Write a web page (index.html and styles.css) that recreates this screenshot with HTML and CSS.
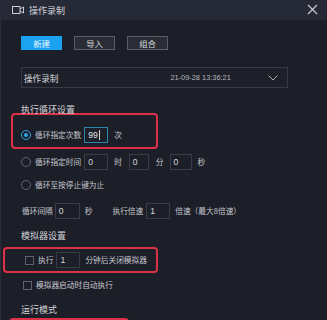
FILE: index.html
```html
<!DOCTYPE html>
<html lang="zh-CN">
<head>
<meta charset="utf-8">
<title>操作录制</title>
<link rel="stylesheet" href="styles.css">
</head>
<body>
<div class="window">
  <div class="titlebar">
    <svg class="cam" width="12" height="8" viewBox="0 0 12 8"><rect x="0.5" y="0.5" width="7.5" height="7" fill="none" stroke="#c9cbd2" stroke-width="1"/><path d="M8 3 L11.5 1 L11.5 7 L8 5" fill="none" stroke="#c9cbd2" stroke-width="1"/></svg>
    <span class="title">操作录制</span>
    <svg class="close" width="11" height="11" viewBox="0 0 11 11"><path d="M1 1 L10 10 M10 1 L1 10" stroke="#c2c4ca" stroke-width="1.3"/></svg>
  </div>
  <div class="content">
    <div class="btnrow">
      <div class="btn primary">新建</div>
      <div class="btn">导入</div>
      <div class="btn">组合</div>
    </div>
    <div class="select">
      <span class="sel-name">操作录制</span>
      <span class="sel-date">21-09-28 13:36:21</span>
      <svg class="chev" width="10" height="6" viewBox="0 0 10 6"><path d="M0.5 0.5 L5 5 L9.5 0.5" fill="none" stroke="#a9abb2" stroke-width="1"/></svg>
    </div>

    <div class="heading h1">执行循环设置</div>
    <div class="hl hl1">
      <div class="row">
        <span class="radio on"></span>
        <span class="lbl">循环指定次数</span>
        <span class="inp active w24 ml3">99<span class="caret"></span></span>
        <span class="lbl ml6">次</span>
      </div>
    </div>
    <div class="row r2">
      <span class="radio"></span>
      <span class="lbl">循环指定时间</span>
      <span class="inp w24 ml3">0</span>
      <span class="lbl ml6">时</span>
      <span class="inp w20 ml7">0</span>
      <span class="lbl ml7">分</span>
      <span class="inp w22 ml6">0</span>
      <span class="lbl ml6">秒</span>
    </div>
    <div class="row r3">
      <span class="radio"></span>
      <span class="lbl">循环至按停止键为止</span>
    </div>
    <div class="row r4">
      <span class="lbl nomargin">循环间隔</span>
      <span class="inp w25 ml2">0</span>
      <span class="lbl ml5">秒</span>
      <span class="lbl ml20">执行倍速</span>
      <span class="inp w24 ml3">1</span>
      <span class="lbl ml5">倍速（最大8倍速）</span>
    </div>

    <div class="heading h2">模拟器设置</div>
    <div class="hl hl2">
      <div class="row">
        <span class="check"></span>
        <span class="lbl">执行</span>
        <span class="inp w24 ml3">1</span>
        <span class="lbl ml5">分钟后关闭模拟器</span>
      </div>
    </div>
    <div class="row r6">
      <span class="check"></span>
      <span class="lbl">模拟器启动时自动执行</span>
    </div>

    <div class="heading h3">运行模式</div>
    <div class="hl hl3"></div>
  </div>
</div>
</body>
</html>
```

FILE: styles.css
```css
* { box-sizing: border-box; }
html, body {
  margin: 0;
  padding: 0;
  width: 327px;
  height: 320px;
  overflow: hidden;
  background: #1c1e28;
  font-family: "Noto Sans CJK SC", "Noto Sans", sans-serif;
  color: #c6c8ce;
}
.window {
  width: 327px;
  height: 320px;
  background: #1c1e28;
  border-left: 1px solid #2a2d39;
}
.titlebar {
  height: 21px;
  background: #262936;
  display: flex;
  align-items: center;
  padding-left: 11px;
  padding-right: 9px;
  border-bottom: 1px solid #20222d;
}
.title {
  margin-left: 5px;
  font-size: 9px;
  color: #cfd1d7;
  line-height: 21px;
}
.close { margin-left: auto; margin-top: -1px; }

.content { padding-left: 20px; }

.btnrow {
  display: flex;
  gap: 12px;
  margin-top: 15px;
}
.btn {
  width: 41px;
  height: 14px;
  border: 1px solid #5b5e67;
  background: #2a2d35;
  font-size: 8.4px;
  line-height: 12px;
  text-align: center;
  color: #d4d6db;
}
.btn.primary {
  background: #1ba2f0;
  border-color: #1ba2f0;
  color: #eaf6ff;
}

.select {
  margin-top: 17px;
  width: 267px;
  height: 21px;
  border: 1px solid #363946;
  background: #1e2029;
  display: flex;
  align-items: center;
  padding-left: 2px;
}
.sel-name { font-size: 8.6px; color: #d4d6db; }
.sel-date {
  margin-left: 112px;
  font-family: "Liberation Sans", sans-serif;
  font-size: 7.4px;
  color: #b5b7bd;
}
.chev { margin-left: auto; margin-right: 9px; }

.heading {
  font-size: 9px;
  line-height: 12px;
  height: 12px;
  color: #d2d4d9;
}
.h1 { margin-top: 16px; margin-bottom: -3px; }
.h2 { margin-top: 11px; }
.h3 { margin-top: 11px; }

.hl {
  border: 2px solid #dc3148;
  border-radius: 4px;
}
.hl1 {
  margin-left: -10px;
  width: 147px;
  height: 36px;
  padding: 12px 0 0 8px;
}
.hl2 {
  margin-top: 5px;
  margin-left: -18px;
  width: 155px;
  height: 26px;
  padding: 3px 0 0 18px;
}
.hl3 {
  margin-top: 2px;
  margin-left: -12px;
  width: 120px;
  height: 10px;
}

.row {
  display: flex;
  align-items: center;
  height: 16px;
}
.r2 { margin-top: 5px; }
.r3 { margin-top: 7px; }
.r4 { margin-top: 10px; padding-left: 1px; }
.r6 { margin-top: 4px; }

.radio {
  width: 10px;
  height: 10px;
  border-radius: 50%;
  border: 1px solid #62656e;
  flex: none;
  position: relative;
}
.radio.on { border-color: #2aa6e6; }
.radio.on::after {
  content: "";
  position: absolute;
  left: 2px; top: 2px;
  width: 4px; height: 4px;
  border-radius: 50%;
  background: #2aa6e6;
}
.check {
  width: 9px;
  height: 9px;
  border: 1px solid #5f626b;
  flex: none;
  margin-left: 2px;
}
.lbl {
  font-size: 7.7px;
  line-height: 16px;
  color: #c6c8ce;
  margin-left: 4px;
  white-space: nowrap;
}
.lbl.nomargin { margin-left: 0; }
.inp {
  height: 16px;
  border: 1px solid #3a3d48;
  background: #1c1e28;
  font-family: "Liberation Sans", sans-serif;
  font-size: 8.6px;
  line-height: 14px;
  padding-left: 3px;
  color: #d8dade;
  flex: none;
  display: flex;
  align-items: center;
}
.inp.active { border-color: #2f86ad; color: #e6e8ec; }
.caret {
  display: inline-block;
  width: 1px;
  height: 10px;
  background: #d8dade;
  margin-left: 1px;
}
.w20 { width: 20px; }
.w22 { width: 22px; }
.w24 { width: 24px; }
.w25 { width: 25px; }
.ml2 { margin-left: 2px; }
.ml3 { margin-left: 3px; }
.ml5 { margin-left: 5px; }
.ml6 { margin-left: 6px; }
.ml7 { margin-left: 7px; }
.ml20 { margin-left: 20px; }
```
